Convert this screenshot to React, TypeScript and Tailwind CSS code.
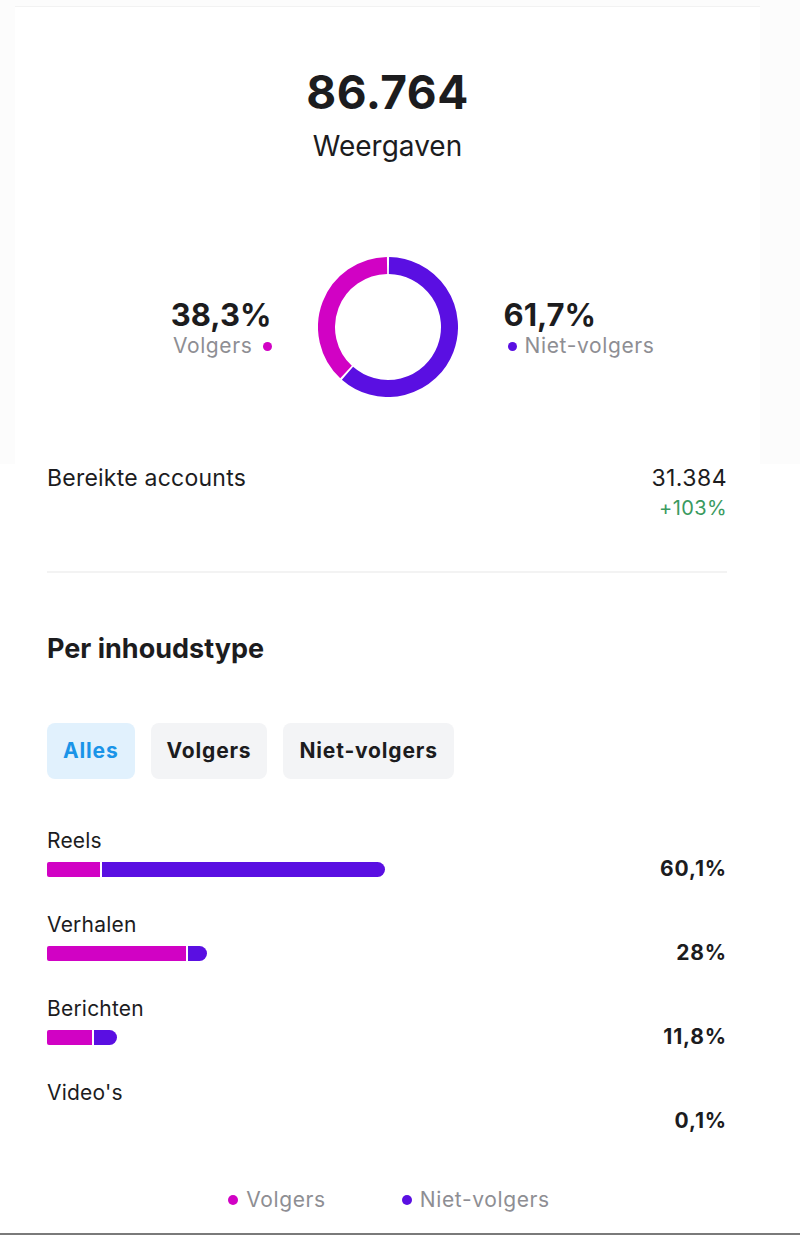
import React from "react";

const MAGENTA = "#d102c4";
const PURPLE = "#5a0fe2";

function arcPath(cx: number, cy: number, r: number, a0: number, a1: number) {
  const toXY = (a: number) => {
    const rad = (a * Math.PI) / 180;
    return [cx + r * Math.sin(rad), cy - r * Math.cos(rad)];
  };
  const [x0, y0] = toXY(a0);
  const [x1, y1] = toXY(a1);
  const large = a1 - a0 > 180 ? 1 : 0;
  return `M ${x0} ${y0} A ${r} ${r} 0 ${large} 1 ${x1} ${y1}`;
}

function Donut() {
  const size = 140;
  const c = size / 2;
  const sw = 17;
  const r = c - sw / 2;
  const split = 0.617 * 360;
  const gap = 0.9;
  return (
    <svg width={size} height={size} viewBox={`0 0 ${size} ${size}`}>
      <path d={arcPath(c, c, r, gap, split - gap)} fill="none" stroke={PURPLE} strokeWidth={sw} />
      <path d={arcPath(c, c, r, split + gap, 360 - gap)} fill="none" stroke={MAGENTA} strokeWidth={sw} />
    </svg>
  );
}

const rows = [
  { label: "Reels", pct: "60,1%", f: 53, nf: 283 },
  { label: "Verhalen", pct: "28%", f: 139, nf: 19 },
  { label: "Berichten", pct: "11,8%", f: 45, nf: 23 },
  { label: "Video's", pct: "0,1%", f: 0, nf: 0 },
];

export default function App() {
  return (
    <div
      className="relative w-[800px] h-[1236px] bg-white text-[#1c1c1e] overflow-hidden"
      style={{ fontFamily: "Inter, 'Noto Sans', sans-serif" }}
    >
      {/* top card */}
      <div className="bg-[#fcfcfc] pt-[6px] pl-[15px] pr-[40px]">
        <div className="bg-white border-t border-[#f2f2f2] h-[458px] flex flex-col items-center">
          <div className="mt-[56px] text-[46px] leading-[58px] font-bold tracking-[0.01em]">86.764</div>
          <div className="mt-[8px] text-[28px] leading-[34px] text-[#1c1c1e]">Weergaven</div>
          <div className="mt-[94px] flex items-center">
            <div className="w-[160px] flex flex-col items-end mr-[46px] mt-[2px]">
              <div className="text-[31px] leading-[36px] font-bold">38,3%</div>
              <div className="flex items-center text-[21px] leading-[26px] text-[#8e8e93] tracking-[0.03em]">
                <span>Volgers</span>
                <span className="w-[9px] h-[9px] rounded-full bg-[#d102c4] ml-[10px]" />
              </div>
            </div>
            <Donut />
            <div className="w-[160px] flex flex-col items-start ml-[46px] mt-[2px]">
              <div className="text-[31px] leading-[36px] font-bold">61,7%</div>
              <div className="flex items-center text-[21px] leading-[26px] text-[#8e8e93] tracking-[0.03em]">
                <span className="w-[9px] h-[9px] rounded-full bg-[#5a0fe2] ml-[4px] mr-[8px]" />
                <span>Niet-volgers</span>
              </div>
            </div>
          </div>
        </div>
      </div>

      <div className="ml-[47px] w-[680px]">
        {/* accounts row */}
        <div className="flex justify-between items-start">
          <div className="text-[23px] leading-[28px] tracking-[0.01em]">Bereikte accounts</div>
          <div className="flex flex-col items-end">
            <div className="text-[23px] leading-[28px] tracking-[0.02em]">31.384</div>
            <div className="text-[20px] leading-[26px] text-[#3a9a60] mt-[3px] tracking-[0.02em]">+103%</div>
          </div>
        </div>

        <div className="mt-[50px] h-[2px] bg-[#f3f3f3]" />

        <div className="mt-[59px] text-[27px] leading-[34px] font-bold">Per inhoudstype</div>

        <div className="mt-[57px] flex gap-[16px]">
          <div className="h-[56px] px-[16px] rounded-[8px] bg-[#e1f1fd] text-[#1a94e8] font-bold text-[21px] tracking-[0.04em] flex items-center">
            Alles
          </div>
          <div className="h-[56px] px-[16px] rounded-[8px] bg-[#f3f4f6] font-bold text-[21px] tracking-[0.04em] flex items-center">
            Volgers
          </div>
          <div className="h-[56px] px-[16px] rounded-[8px] bg-[#f3f4f6] font-bold text-[21px] tracking-[0.04em] flex items-center">
            Niet-volgers
          </div>
        </div>

        <div className="mt-[49px] flex flex-col gap-[29px]">
          {rows.map((r) => (
            <div key={r.label} className="flex flex-col">
              <div className="text-[21px] leading-[26px] tracking-[0.01em]">{r.label}</div>
              <div className="mt-[1px] h-[28px] flex items-center">
                <div className="w-[561px] h-[15px] flex">
                  {r.f > 0 && (
                    <div className="h-full rounded-l-[2px]" style={{ width: r.f, background: MAGENTA }} />
                  )}
                  {r.nf > 0 && (
                    <div
                      className="h-full rounded-r-full ml-[2px]"
                      style={{ width: r.nf, background: PURPLE }}
                    />
                  )}
                </div>
                <div className="flex-1 text-right font-bold text-[21px] leading-[28px] tracking-[0.04em]">{r.pct}</div>
              </div>
            </div>
          ))}
        </div>
      </div>

      {/* legend */}
      <div className="absolute left-0 right-0 top-[1186px] flex justify-center">
        <div className="ml-[-22px] flex items-center gap-[76px] text-[21px] leading-[28px] text-[#8e8e93] tracking-[0.03em]">
          <div className="flex items-center">
            <span className="w-[10px] h-[10px] rounded-full bg-[#d102c4] mr-[8px]" />
            Volgers
          </div>
          <div className="flex items-center">
            <span className="w-[10px] h-[10px] rounded-full bg-[#5a0fe2] mr-[8px]" />
            Niet-volgers
          </div>
        </div>
      </div>

      <div className="absolute left-0 right-0 top-[1233px] h-[2px] bg-[#7a7a7a]" />
    </div>
  );
}
